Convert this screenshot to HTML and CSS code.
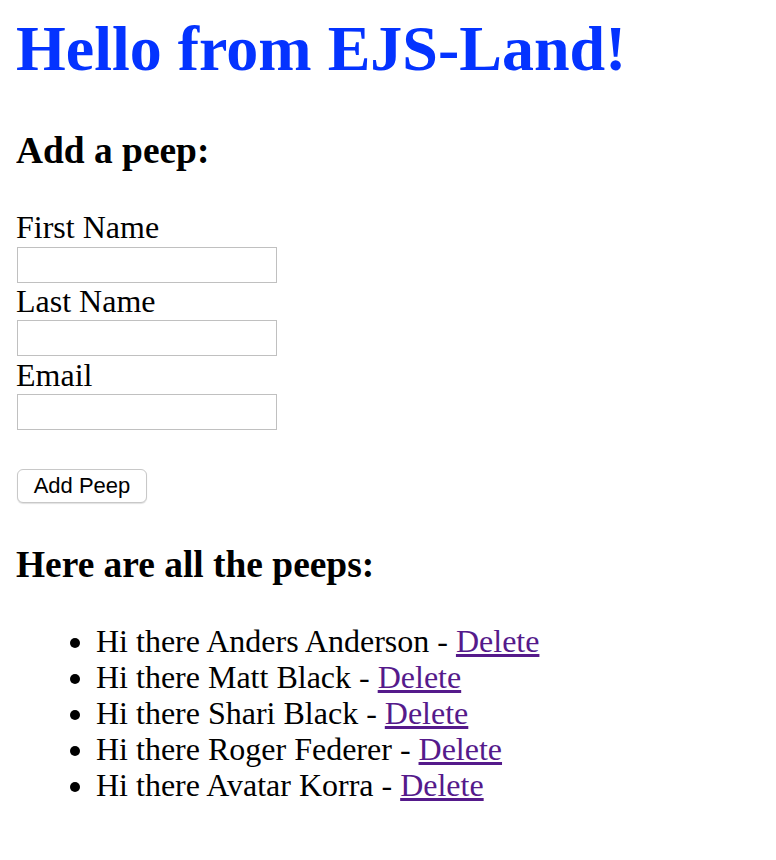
FILE: index.html
```html
<!DOCTYPE html>
<html>
<head>
<meta charset="utf-8">
<title>EJS-Land</title>
<link rel="stylesheet" href="styles.css">
</head>
<body>
<h1 class="title">Hello from EJS-Land!</h1>
<h3 class="section">Add a peep:</h3>
<form class="peep-form">
  <label class="field-label">First Name</label>
  <input class="field-input" type="text">
  <label class="field-label">Last Name</label>
  <input class="field-input" type="text">
  <label class="field-label">Email</label>
  <input class="field-input" type="text">
  <button class="add-btn" type="button">Add Peep</button>
</form>
<h3 class="section section-list">Here are all the peeps:</h3>
<ul class="peeps">
  <li>Hi there Anders Anderson - <a class="del" href="#">Delete</a></li>
  <li>Hi there Matt Black - <a class="del" href="#">Delete</a></li>
  <li>Hi there Shari Black - <a class="del" href="#">Delete</a></li>
  <li>Hi there Roger Federer - <a class="del" href="#">Delete</a></li>
  <li>Hi there Avatar Korra - <a class="del" href="#">Delete</a></li>
</ul>
</body>
</html>
```
FILE: styles.css
```css
html, body {
  background: #fff;
}
body {
  margin: 0 16px 16px;
  font-family: "Liberation Serif", "Times New Roman", serif;
  font-size: 32px;
  color: #000;
}
.title {
  font-size: 64px;
  font-weight: bold;
  color: #0433ff;
  margin: 12px 0 42.88px;
  line-height: normal;
}
.section {
  font-size: 37.44px;
  font-weight: bold;
  margin: 37.44px 0;
}
.section-list {
  margin: 40px 0 36.5px;
}
.peep-form {
  display: flex;
  flex-direction: column;
  align-items: flex-start;
}
.field-label {
  display: block;
  line-height: 36.77px;
}
.field-input {
  display: block;
  box-sizing: border-box;
  width: 260px;
  height: 36px;
  margin: 0.5px 0 0.5px 1px;
  padding: 2px 4px;
  border: 1px solid #c0c0c0;
  border-radius: 0;
  background: #fff;
  font-size: 22px;
  outline: none;
}
.add-btn {
  display: block;
  box-sizing: border-box;
  margin: 38px 0 0 1px;
  width: 130px;
  height: 34.5px;
  padding: 0 15px;
  font-family: "Liberation Sans", Arial, Helvetica, sans-serif;
  font-size: 22px;
  color: #000;
  background: #fff;
  border: 1px solid #c8c8c8;
  border-radius: 6px;
  box-shadow: 0 1px 1px rgba(0,0,0,0.12);
}
.peeps {
  margin: 32px 0;
  padding-left: 80px;
  list-style: disc;
}
.peeps li {
  line-height: 36px;
}
.del {
  color: #551a8b;
  text-decoration: underline;
}
```
